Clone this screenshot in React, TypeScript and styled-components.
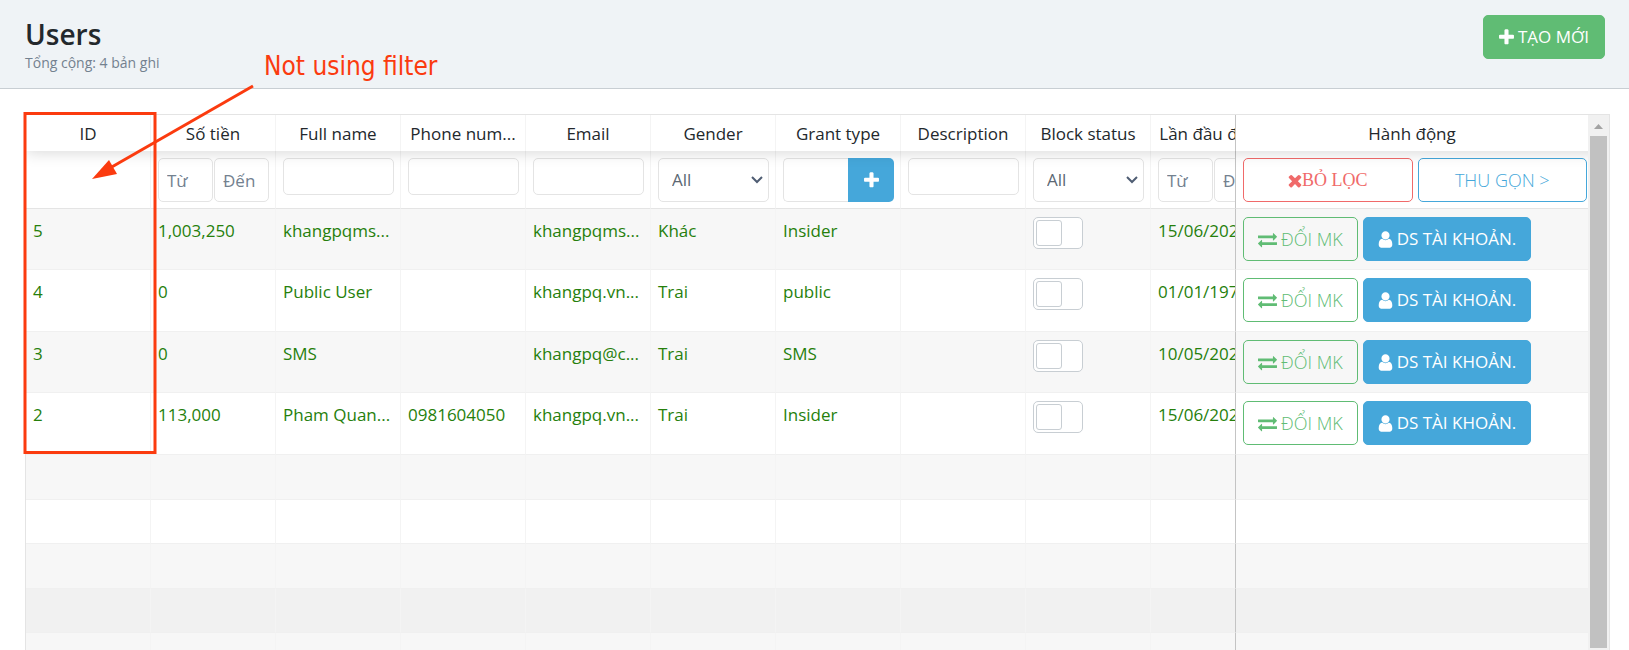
import React from "react";
import styled, { createGlobalStyle, css } from "styled-components";

const GlobalStyle = createGlobalStyle`
  *, *::before, *::after { box-sizing: border-box; }
  html, body { margin: 0; height: 100%; overflow: hidden; background: #fff; }
  #root { height: 100%; }
  body, button, input, select {
    font-family: "Open Sans", "Noto Sans", sans-serif;
    font-size: 17px;
    line-height: 24px;
  }
`;

const Page = styled.div`
  position: relative;
  display: flex;
  flex-direction: column;
  height: 100vh;
  color: #23282c;
`;

const Header = styled.header`
  display: flex;
  justify-content: space-between;
  align-items: flex-start;
  padding: 15px 24px 14px 25px;
  background: #eff3f6;
  border-bottom: 1px solid #c8ced3;
`;

const Title = styled.h1`
  margin: 0;
  font-size: 28px;
  line-height: 38px;
  font-weight: 600;
`;

const Subtitle = styled.p`
  margin: 0;
  padding-bottom: 1px;
  font-size: 14px;
  line-height: 20px;
  color: #73818f;
`;

const tones = {
  green: "#60bc74",
  blue: "#45a7da",
  red: "#f06a6a",
};

const Button = styled.button<{ $tone: keyof typeof tones; $outline?: boolean; $grow?: boolean }>`
  display: inline-flex;
  align-items: center;
  justify-content: center;
  gap: 4px;
  height: 44px;
  padding: 0 14px;
  border: 1px solid ${(p) => tones[p.$tone]};
  border-radius: 5px;
  white-space: nowrap;
  ${(p) => (p.$grow ? "flex: 1;" : "")}
  ${(p) =>
    p.$outline
      ? css`
          background: transparent;
          color: ${tones[p.$tone]};
          font-size: 18px;
          font-weight: 300;
        `
      : css`
          background: ${tones[p.$tone]};
          color: #fff;
        `}
`;

const CreateButton = styled(Button)`
  padding: 0 15px;
`;

const SerifButton = styled(Button)`
  gap: 0;
  font-family: "Liberation Serif", serif;
`;

const Content = styled.main`
  display: flex;
  flex: 1;
  min-height: 0;
  padding: 25px 19px 0 25px;
`;

const TableFrame = styled.div`
  display: flex;
  flex: 1;
  min-width: 0;
  border: 1px solid #e4e4e4;
  border-bottom: 0;
`;

const Scroller = styled.div`
  flex: 1;
  min-width: 0;
  overflow: hidden;
`;

const Table = styled.table`
  width: 100%;
  min-width: 1603px;
  table-layout: fixed;
  border-collapse: separate;
  border-spacing: 0;
`;

const DataCol = styled.col`
  width: 125px;
`;

const ActionCol = styled.col`
  width: 353px;
`;

const HeadRow = styled.tr`
  position: relative;
  z-index: 3;
  height: 36px;
  box-shadow: 0 2px 15px 0 rgba(0, 0, 0, 0.15);
`;

const pinned = css`
  position: sticky;
  right: 0;
  z-index: 2;
  background: inherit;
  border-left: 1px solid #c4c4c4;
  border-right: 0;
`;

const HeadCell = styled.th<{ $pinned?: boolean }>`
  height: 36px;
  padding: 2px 7px 0;
  background: #fff;
  border-right: 1px solid #f4f4f4;
  font-weight: 400;
  text-align: center;
  white-space: nowrap;
  overflow: hidden;
  ${(p) => p.$pinned && pinned}
  ${(p) => p.$pinned && "background: #fff;"}
`;

const FilterRow = styled.tr`
  height: 58px;
  background: #fff;
`;

const Cell = styled.td<{ $pinned?: boolean }>`
  padding: 10px 7px 0;
  border-right: 1px solid #f4f4f4;
  border-bottom: 1px solid #f0f0f0;
  color: #267f0c;
  vertical-align: top;
  white-space: nowrap;
  overflow: hidden;
  ${(p) => p.$pinned && pinned}
`;

const ControlCell = styled(Cell)`
  padding-top: 8px;
`;

const FilterCell = styled(Cell)`
  padding: 7px 6px 0 7px;
  border-bottom-color: #e4e4e4;
  ${(p) => p.$pinned && "padding-right: 1px;"}
`;

const DataRow = styled.tr`
  height: 62px;
  background: #fff;
  &:nth-child(odd) {
    height: 61px;
    background: #f7f7f7;
  }
`;

const EmptyRow = styled.tr<{ $active?: boolean }>`
  height: 44px;
  background: ${(p) => (p.$active ? "#f1f1f1" : "#fff")};
  &:nth-child(odd) {
    height: 45px;
    background: #f7f7f7;
  }
`;

const Controls = styled.div<{ $gap: number }>`
  display: flex;
  gap: ${(p) => p.$gap}px;
`;

const field = css`
  width: 100%;
  min-width: 0;
  border: 1px solid #e4e4e4;
  border-radius: 5px;
  background: #fff;
  color: #5c6873;
`;

const TextInput = styled.input<{ $tall?: boolean; $joined?: boolean }>`
  ${field}
  display: block;
  height: ${(p) => (p.$tall ? 44 : 37)}px;
  padding: 0 8px;
  ${(p) => p.$joined && "border-radius: 5px 0 0 5px; border-right: 0;"}
  &::placeholder { color: #73818f; opacity: 1; }
`;

const SelectBox = styled.div`
  display: grid;
  align-items: center;
  > * { grid-area: 1 / 1; }
  > svg { justify-self: end; margin-right: 6px; pointer-events: none; }
`;

const Select = styled.select`
  ${field}
  height: 44px;
  padding: 0 13px;
  appearance: none;
`;

const AddButton = styled.button`
  display: flex;
  flex: 0 0 46px;
  align-items: center;
  justify-content: center;
  height: 44px;
  padding: 0;
  border: 0;
  border-radius: 0 5px 5px 0;
  background: #45a7da;
  color: #fff;
`;

const Toggle = styled.input`
  display: flex;
  align-items: center;
  appearance: none;
  width: 50px;
  height: 32px;
  margin: 0;
  padding: 0 2px;
  border: 1px solid #c8ced3;
  border-radius: 5px;
  background: #fff;
  &::before {
    content: "";
    width: 26px;
    height: 26px;
    border: 1px solid #c8ced3;
    border-radius: 3px;
  }
  &:checked { justify-content: flex-end; }
`;

const ScrollTrack = styled.div`
  display: flex;
  flex-direction: column;
  flex: 0 0 21px;
  align-items: center;
  padding-bottom: 2px;
  background: #f1f1f1;
`;

const ScrollArrow = styled.svg`
  flex: none;
  margin: 9px 0 7px;
`;

const ScrollThumb = styled.div`
  flex: 1;
  width: 17px;
  background: #c1c1c1;
`;

const Annotation = styled.div`
  position: absolute;
  left: 264px;
  top: 49px;
  color: #fb3b0f;
  font-family: "DejaVu Sans Condensed", "DejaVu Sans", sans-serif;
  font-size: 26px;
  line-height: 34px;
  z-index: 6;
`;

const Markup = styled.svg`
  position: absolute;
  left: 0;
  top: 0;
  z-index: 5;
  pointer-events: none;
`;

const iconPaths = {
  plus: "M1600 736v192q0 40-28 68t-68 28h-416v416q0 40-28 68t-68 28h-192q-40 0-68-28t-28-68v-416h-416q-40 0-68-28t-28-68v-192q0-40 28-68t68-28h416v-416q0-40 28-68t68-28h192q40 0 68 28t28 68v416h416q40 0 68 28t28 68z",
  times:
    "M1490 1322q0 40-28 68l-136 136q-28 28-68 28t-68-28l-294-294-294 294q-28 28-68 28t-68-28l-136-136q-28-28-28-68t28-68l294-294-294-294q-28-28-28-68t28-68l136-136q28-28 68-28t68 28l294 294 294-294q28-28 68-28t68 28l136 136q28 28 28 68t-28 68l-294 294 294 294q28 28 28 68z",
  exchange:
    "M1792 1184v192q0 13-9.500 22.500t-22.500 9.500h-1376v192q0 13-9.500 22.500t-22.500 9.500q-12 0-24-10l-319-320q-9-9-9-22 0-14 9-23l320-320q9-9 23-9 13 0 22.500 9.500t9.500 22.500v192h1376q13 0 22.500 9.500t9.500 22.500zm0-544q0 14-9 23l-320 320q-9 9-23 9-13 0-22.500-9.500t-9.500-22.500v-192h-1376q-13 0-22.500-9.500t-9.500-22.500v-192q0-13 9.500-22.500t22.500-9.500h1376v-192q0-14 9-23t23-9q12 0 24 10l319 319q9 9 9 23z",
  user: "M1536 1399q0 109-62.500 187t-150.500 78h-854q-88 0-150.500-78t-62.500-187q0-85 8.500-160.500t31.500-152 58.500-131 94-89 134.500-34.500q131 128 313 128t313-128q76 0 134.500 34.500t94 89 58.500 131 31.500 152 8.500 160.500zm-256-887q0 159-112.500 271.500t-271.500 112.500-271.500-112.500-112.500-271.500 112.500-271.500 271.500-112.500 271.500 112.500 112.500 271.500z",
};

const iconBoxes = {
  plus: "192 0 1408 1792",
  times: "240 0 1312 1792",
  exchange: "0 0 1792 1792",
  user: "192 0 1408 1792",
};

function Icon({ name, width }: { name: keyof typeof iconPaths; width: number }) {
  return (
    <svg width={width} height={19} viewBox={iconBoxes[name]} fill="currentColor" aria-hidden="true">
      <path d={iconPaths[name]} />
    </svg>
  );
}

function FilterSelect({ label }: { label: string }) {
  return (
    <SelectBox>
      <Select aria-label={label}>
        <option>All</option>
      </Select>
      <svg width="12" height="8" viewBox="0 0 12 8" fill="none" stroke="#4f5d73" strokeWidth="2" aria-hidden="true">
        <path d="M1 1l5 5 5-5" />
      </svg>
    </SelectBox>
  );
}

function RangeFilter({ label }: { label: string }) {
  return (
    <Controls $gap={1}>
      <TextInput $tall placeholder="Từ" aria-label={`${label} từ`} />
      <TextInput $tall placeholder="Đến" aria-label={`${label} đến`} />
    </Controls>
  );
}

const headers = [
  "ID",
  "Số tiền",
  "Full name",
  "Phone num...",
  "Email",
  "Gender",
  "Grant type",
  "Description",
  "Block status",
  "Lần đầu đăng",
];

const users = [
  { id: 5, money: "1,003,250", name: "khangpqms...", phone: "", email: "khangpqms...", gender: "Khác", grant: "Insider", first: "15/06/2020" },
  { id: 4, money: "0", name: "Public User", phone: "", email: "khangpq.vn...", gender: "Trai", grant: "public", first: "01/01/1970" },
  { id: 3, money: "0", name: "SMS", phone: "", email: "khangpq@c...", gender: "Trai", grant: "SMS", first: "10/05/2020" },
  { id: 2, money: "113,000", name: "Pham Quan...", phone: "0981604050", email: "khangpq.vn...", gender: "Trai", grant: "Insider", first: "15/06/2020" },
];

const emptyRows = [0, 1, 2, 3, 4, 5];

export default function App() {
  return (
    <Page>
      <GlobalStyle />
      <Header>
        <div>
          <Title>Users</Title>
          <Subtitle>Tổng cộng: 4 bản ghi</Subtitle>
        </div>
        <CreateButton $tone="green">
          <Icon name="plus" width={15} />
          TẠO MỚI
        </CreateButton>
      </Header>
      <Content>
        <TableFrame>
          <Scroller>
            <Table>
              <colgroup>
                {headers.map((h) => (
                  <DataCol key={h} />
                ))}
                <ActionCol />
              </colgroup>
              <thead>
                <HeadRow>
                  {headers.map((h) => (
                    <HeadCell key={h} scope="col">
                      {h}
                    </HeadCell>
                  ))}
                  <HeadCell scope="col" $pinned>
                    Hành động
                  </HeadCell>
                </HeadRow>
                <FilterRow>
                  <FilterCell />
                  <FilterCell>
                    <RangeFilter label="Số tiền" />
                  </FilterCell>
                  <FilterCell>
                    <TextInput aria-label="Full name" />
                  </FilterCell>
                  <FilterCell>
                    <TextInput aria-label="Phone number" />
                  </FilterCell>
                  <FilterCell>
                    <TextInput aria-label="Email" />
                  </FilterCell>
                  <FilterCell>
                    <FilterSelect label="Gender" />
                  </FilterCell>
                  <FilterCell>
                    <Controls $gap={0}>
                      <TextInput $tall $joined aria-label="Grant type" />
                      <AddButton aria-label="Add grant type">
                        <Icon name="plus" width={15} />
                      </AddButton>
                    </Controls>
                  </FilterCell>
                  <FilterCell>
                    <TextInput aria-label="Description" />
                  </FilterCell>
                  <FilterCell>
                    <FilterSelect label="Block status" />
                  </FilterCell>
                  <FilterCell>
                    <RangeFilter label="Lần đầu" />
                  </FilterCell>
                  <FilterCell $pinned>
                    <Controls $gap={5}>
                      <SerifButton $tone="red" $outline $grow>
                        <Icon name="times" width={14} />
                        BỎ LỌC
                      </SerifButton>
                      <Button $tone="blue" $outline $grow>
                        THU GỌN &gt;
                      </Button>
                    </Controls>
                  </FilterCell>
                </FilterRow>
              </thead>
              <tbody>
                {users.map((u) => (
                  <DataRow key={u.id}>
                    <Cell>{u.id}</Cell>
                    <Cell>{u.money}</Cell>
                    <Cell>{u.name}</Cell>
                    <Cell>{u.phone}</Cell>
                    <Cell>{u.email}</Cell>
                    <Cell>{u.gender}</Cell>
                    <Cell>{u.grant}</Cell>
                    <Cell />
                    <ControlCell>
                      <Toggle type="checkbox" aria-label={`Block user ${u.id}`} />
                    </ControlCell>
                    <Cell>{u.first}</Cell>
                    <ControlCell $pinned>
                      <Controls $gap={5}>
                        <Button $tone="green" $outline>
                          <Icon name="exchange" width={19} />
                          ĐỔI MK
                        </Button>
                        <Button $tone="blue">
                          <Icon name="user" width={15} />
                          DS TÀI KHOẢN.
                        </Button>
                      </Controls>
                    </ControlCell>
                  </DataRow>
                ))}
                {emptyRows.map((n) => (
                  <EmptyRow key={n} $active={n === 3}>
                    {headers.map((h) => (
                      <Cell key={h} />
                    ))}
                    <Cell $pinned />
                  </EmptyRow>
                ))}
              </tbody>
            </Table>
          </Scroller>
          <ScrollTrack>
            <ScrollArrow width="9" height="5" viewBox="0 0 9 5" fill="#a3a3a3" aria-hidden="true">
              <path d="M0 5L4.500 0L9 5z" />
            </ScrollArrow>
            <ScrollThumb />
          </ScrollTrack>
        </TableFrame>
      </Content>
      <Annotation>Not using filter</Annotation>
      <Markup width="260" height="460" viewBox="0 0 260 460" fill="none" stroke="#fb3b0f" aria-hidden="true">
        <rect x="25" y="113.500" width="130" height="339" strokeWidth="3" />
        <path d="M253 86L110 168" strokeWidth="3" />
        <path d="M92 179L109 160L117 174z" fill="#fb3b0f" stroke="none" />
      </Markup>
    </Page>
  );
}
